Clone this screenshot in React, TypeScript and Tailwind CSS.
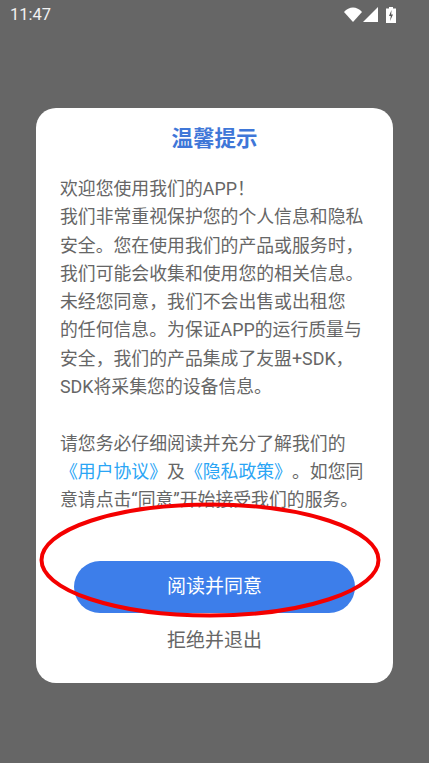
export default function App() {
  const cjk = { fontFamily: 'Roboto, "Noto Sans CJK SC", sans-serif' };
  return (
    <div className="relative h-[763px] w-[429px] overflow-hidden bg-[#666666] flex flex-col" style={cjk}>
      <div className="flex h-[30px] items-center justify-between pl-[10px] pr-[33px] text-[16.5px] text-[#f2f2f2]">
        <span className="pt-[1px]">11:47</span>
        <div className="flex items-center">
          <svg width="18" height="16" viewBox="0 0 18 16" className="mr-[1px]">
            <path d="M0 5 C5 -1 13 -1 18 5 L9 15 Z" fill="#ffffff" />
          </svg>
          <svg width="16" height="16" viewBox="0 0 16 16" className="mr-[7px]">
            <path d="M0 15 L15 0 V15 Z" fill="#ffffff" />
          </svg>
          <svg width="10" height="16" viewBox="0 0 10 16">
            <path d="M3 0 H7 V1.500 H10 V16 H0 V1.500 H3 Z" fill="#ffffff" />
            <path d="M5.500 3 L3 9 H4.800 L4 14 L7 7.500 H5.200 Z" fill="#555555" />
          </svg>
        </div>
      </div>
      <div className="mx-[36px] mt-[78px] h-[575px] rounded-[20px] bg-white flex flex-col items-center">
        <div className="mt-[15px] text-[21.5px] leading-[32px] font-bold text-[#3f77d8]">温馨提示</div>
        <div className="mt-[20px] w-full px-[24px] text-[17.85px] leading-[28.3px] text-[#666666] whitespace-nowrap [text-spacing-trim:space-all]">
          欢迎您使用我们的APP！<br />
          我们非常重视保护您的个人信息和隐私<br />
          安全。您在使用我们的产品或服务时，<br />
          我们可能会收集和使用您的相关信息。<br />
          未经您同意，我们不会出售或出租您<br />
          的任何信息。为保证APP的运行质量与<br />
          安全，我们的产品集成了友盟+SDK，<br />
          SDK将采集您的设备信息。<br />
          <br />
          请您务必仔细阅读并充分了解我们的<br />
          <span className="text-[#2aa5f5]">《用户协议》</span>及<span className="text-[#2aa5f5]">《隐私政策》</span>。如您同<br />
          意请点击“同意”开始接受我们的服务。
        </div>
        <button className="mt-[46px] h-[52px] w-[281px] rounded-[26px] bg-[#3d7eea] pt-[1px] text-[19px] text-white">阅读并同意</button>
        <div className="mt-[14px] text-[19px] leading-[28px] text-[#666666]">拒绝并退出</div>
      </div>
      <svg className="absolute left-0 top-0" width="429" height="763" viewBox="0 0 429 763" fill="none">
        <ellipse cx="210" cy="560" rx="168.500" ry="55.500" stroke="#f40000" strokeWidth="4" />
      </svg>
    </div>
  );
}
